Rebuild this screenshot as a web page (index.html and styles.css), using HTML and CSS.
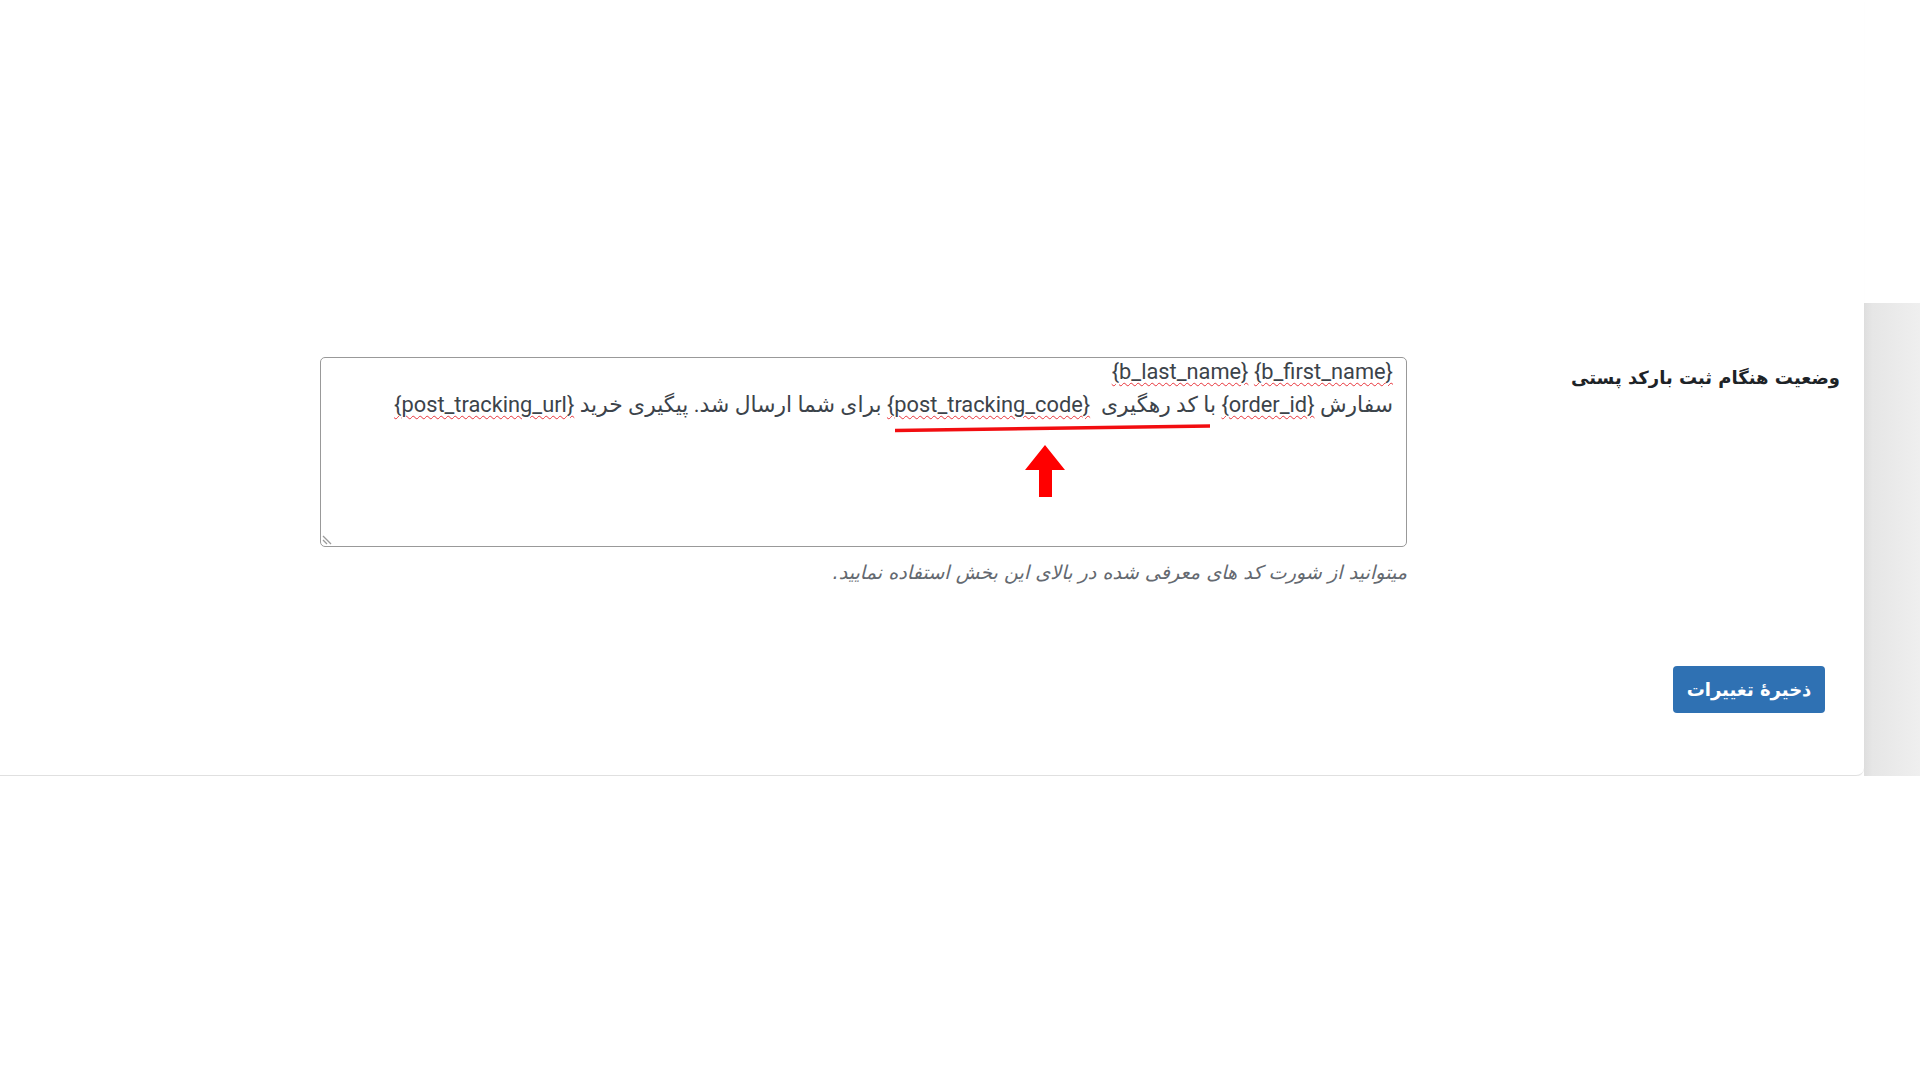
FILE: index.html
```html
<!DOCTYPE html>
<html lang="fa" dir="rtl">
  <head>
    <meta charset="UTF-8" />
    <meta name="viewport" content="width=device-width, initial-scale=1.0" />
    <link rel="stylesheet" href="styles.css">
    <title>تنظیمات پیامک</title>
  </head>
  <body>
    <div class="layout">
      <div class="side"></div>
      <div class="card">
        <div class="form-row">
          <div class="row-label">وضعیت هنگام ثبت بارکد پستی</div>
          <div class="row-field">
            <div class="textarea">
              <div class="line"><span class="typo">{b_first_name}</span> <span class="typo">{b_last_name}</span></div>
              <div class="line">سفارش <span class="typo">{order_id}</span> با کد رهگیری&nbsp; <span class="typo">{post_tracking_code}</span> برای شما ارسال شد. پیگیری خرید <span class="typo">{post_tracking_url}</span></div>
              <svg class="resize" width="12" height="12" viewBox="0 0 12 12">
                <line x1="1" y1="3" x2="9" y2="11" stroke="#9a9a9a" stroke-width="1.2" />
                <line x1="1" y1="7" x2="5" y2="11" stroke="#9a9a9a" stroke-width="1.2" />
              </svg>
              <svg class="marks" width="1087" height="190" viewBox="0 0 1087 190">
                <path d="M575 73.5 L890 69" stroke="#f20d10" stroke-width="3.5" fill="none" />
                <polygon points="725,88 745,113 732,113 732,140 719,140 719,113 705,113" fill="#ff0000" />
              </svg>
            </div>
            <p class="help">میتوانید از شورت کد های معرفی شده در بالای این بخش استفاده نمایید.</p>
          </div>
        </div>
        <div class="actions">
          <button type="button" class="btn-save">ذخیرهٔ تغییرات</button>
        </div>
      </div>
    </div>
  </body>
</html>
```

FILE: styles.css
```css
body {
  margin: 0;
  background: #fff;
  font-family: "DejaVu Sans", sans-serif;
  color: #1d2327;
}

.layout {
  display: flex;
  height: 776px;
}

.side {
  width: 56px;
  margin-top: 303px;
  background: linear-gradient(to left, #efefef, #e6e6e6 85%, #dedede);
}

.card {
  flex: 1;
  background: #fff;
  border-bottom: 1px solid #e0e0e0;
  border-bottom-right-radius: 8px;
  box-shadow: 0 1px 1px rgba(0, 0, 0, 0.04);
  padding: 357px 24px 0 0;
  box-sizing: border-box;
}

.form-row {
  display: flex;
  gap: 23px;
}

.row-label {
  width: 410px;
  padding-top: 10px;
  font-weight: bold;
  font-size: 18px;
  color: #1d2327;
}

.row-field {
  width: 1087px;
}

.textarea {
  position: relative;
  height: 190px;
  box-sizing: border-box;
  border: 1px solid #999;
  border-radius: 5px;
  padding: 0 13px;
  font-family: Roboto, "DejaVu Sans", sans-serif;
  font-size: 21.8px;
  line-height: 33px;
  color: #3c434a;
}

.line:first-child {
  margin-top: -3px;
}

.typo {
  text-decoration: underline wavy #e8333a;
  text-decoration-thickness: 1px;
  text-underline-offset: 3px;
}

.resize {
  position: absolute;
  left: 1px;
  bottom: 1px;
}

.marks {
  position: absolute;
  left: -1px;
  top: -1px;
  pointer-events: none;
}

.help {
  margin: 14px 0 0;
  font-size: 19.2px;
  font-style: italic;
  color: #646970;
}

.actions {
  margin-top: 82px;
  padding-right: 15px;
}

.btn-save {
  width: 152px;
  height: 47px;
  border: none;
  border-radius: 4px;
  background: #2f71b3;
  color: #fff;
  font-family: "DejaVu Sans", sans-serif;
  font-weight: bold;
  font-size: 18px;
}
```
